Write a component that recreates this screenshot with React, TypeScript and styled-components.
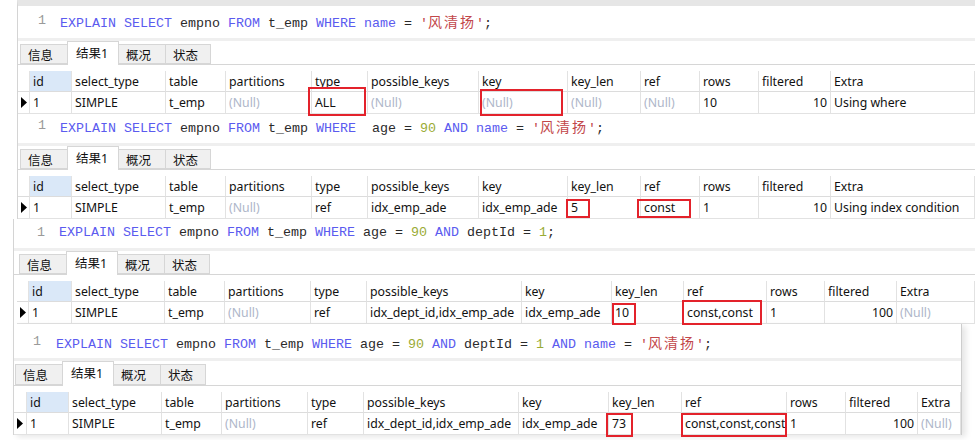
import React from 'react';
import styled, { createGlobalStyle } from 'styled-components';

const Global = createGlobalStyle`
  html, body { margin: 0; padding: 0; background: #fff; }
  body { width: 975px; height: 440px; overflow: hidden; font-family: "Noto Sans", "Noto Sans CJK SC", sans-serif; }
`;

const Page = styled.div`
  display: flex;
  flex-direction: column;
  width: 975px;
  height: 440px;
  overflow: hidden;
  background: #fff;
`;

const Window = styled.section<{ $left: number; $width: number; $topBand: number; $edge?: boolean }>`
  position: relative;
  flex: none;
  box-sizing: border-box;
  margin-left: ${(p) => p.$left}px;
  width: ${(p) => p.$width}px;
  background: #fff;
  border-left: 1px solid #d4d4d4;
  ${(p) => (p.$topBand ? `border-top: ${p.$topBand}px solid #e6e6e6;` : '')}
  ${(p) => (p.$edge ? 'border-right: 1px solid #cdcdcd; box-shadow: 4px 2px 6px rgba(0,0,0,0.10);' : '')}
`;

const Editor = styled.div<{ $padTop: number; $height: number; $numPad: number }>`
  box-sizing: border-box;
  height: ${(p) => p.$height}px;
  padding-top: ${(p) => p.$padTop}px;
  padding-left: ${(p) => p.$numPad}px;
  display: flex;
  align-items: flex-start;
  font-family: "Liberation Mono", monospace;
  font-size: 13.33px;
`;

const LineNo = styled.span<{ $w: number }>`
  flex: none;
  width: ${(p) => p.$w}px;
  line-height: 24px;
  color: #9a9a9a;
`;

const Code = styled.span`
  white-space: pre;
  line-height: 24px;
  color: #2a2a2a;
`;

const Tok = styled.span<{ $kind: 'k' | 'i' | 'n' | 's' | 'o' }>`
  color: ${(p) =>
    p.$kind === 'k' ? '#5b5bef' : p.$kind === 'n' ? '#9aab34' : p.$kind === 's' ? '#c2474a' : '#2a2a2a'};
`;

const Han = styled.span`
  font-family: "Noto Sans CJK SC", sans-serif;
  font-size: 14px;
  letter-spacing: 2px;
  color: #c2474a;
`;

const Divider = styled.div`
  height: 3px;
  background: #efefef;
`;

const TabBar = styled.div<{ $pad: number; $h: number }>`
  box-sizing: border-box;
  display: flex;
  align-items: flex-end;
  height: ${(p) => p.$h}px;
  padding-left: ${(p) => p.$pad}px;
  border-bottom: 1px solid #d6d6d6;
`;

const Tab = styled.div<{ $active?: boolean; $w: number }>`
  box-sizing: border-box;
  width: ${(p) => p.$w}px;
  height: ${(p) => (p.$active ? 'calc(100% + 1px)' : 'calc(100% - 3px)')};
  margin-bottom: ${(p) => (p.$active ? '-1px' : '0')};
  margin-right: -1px;
  display: flex;
  align-items: center;
  padding-left: ${(p) => (p.$active ? 8 : 7)}px;
  padding-bottom: ${(p) => (p.$active ? 3 : 0)}px;
  background: ${(p) => (p.$active ? '#fff' : '#f0f0f0')};
  border: 1px solid #d6d6d6;
  border-bottom: ${(p) => (p.$active ? 'none' : '1px solid #d6d6d6')};
  font-size: 12.5px;
  color: #111;
  position: relative;
  z-index: ${(p) => (p.$active ? 1 : 0)};
`;

const Grid = styled.div<{ $cols: string; $pad: number }>`
  display: grid;
  grid-template-columns: ${(p) => p.$cols};
  margin-top: 6px;
  margin-left: ${(p) => p.$pad}px;
`;

const HeadCell = styled.div<{ $sel?: boolean }>`
  box-sizing: border-box;
  height: 21px;
  display: flex;
  align-items: center;
  padding-left: 3px;
  background: ${(p) => (p.$sel ? '#dae8f8' : '#fff')};
  border-right: 1px solid #e2e2e2;
  border-bottom: 1px solid #dcdcdc;
  font-size: 12.3px;
  color: #111;
  white-space: nowrap;
  overflow: hidden;
`;

const DataCell = styled.div<{ $null?: boolean; $right?: boolean }>`
  position: relative;
  box-sizing: border-box;
  height: 22px;
  display: flex;
  align-items: center;
  justify-content: ${(p) => (p.$right ? 'flex-end' : 'flex-start')};
  padding: 0 3px;
  border-right: 1px solid #e2e2e2;
  border-bottom: 1px solid #e2e2e2;
  font-size: 12.3px;
  color: ${(p) => (p.$null ? '#aeb6c9' : '#111')};
  white-space: nowrap;
`;

const Value = styled.span`
  flex: none;
`;

const Marker = styled.div`
  box-sizing: border-box;
  height: 22px;
  display: flex;
  align-items: center;
  padding-left: 3px;
  border-right: 1px solid #e2e2e2;
  border-bottom: 1px solid #e2e2e2;
`;

const Corner = styled.div`
  box-sizing: border-box;
  height: 21px;
  border-right: 1px solid #e2e2e2;
  border-bottom: 1px solid #dcdcdc;
`;

const RedBox = styled.div`
  position: absolute;
  z-index: 5;
  box-sizing: border-box;
  border: 2px solid #e3222b;
  pointer-events: none;
`;

type Box = { l: number; t: number; w: number; h: number };

const COLS = ['id', 'select_type', 'table', 'partitions', 'type', 'possible_keys', 'key', 'key_len', 'ref', 'rows', 'filtered', 'Extra'];
const KW = new Set(['EXPLAIN', 'SELECT', 'FROM', 'WHERE', 'AND', 'name']);

function renderSql(sql: string) {
  const re = /('[^']*')|(\d+)|([A-Za-z_]+)|(\s+)|(.)/g;
  const out: React.ReactNode[] = [];
  let m: RegExpExecArray | null;
  let i = 0;
  while ((m = re.exec(sql))) {
    const [t] = m;
    if (m[1]) {
      out.push(
        <Tok key={i++} $kind="s">
          '<Han>{t.slice(1, -1)}</Han>'
        </Tok>
      );
    } else if (m[2]) out.push(<Tok key={i++} $kind="n">{t}</Tok>);
    else if (m[3]) out.push(<Tok key={i++} $kind={KW.has(t) ? 'k' : 'i'}>{t}</Tok>);
    else out.push(<Tok key={i++} $kind="o">{t}</Tok>);
  }
  return out;
}

type PanelDef = {
  left: number;
  width: number;
  topBand: number;
  edge?: boolean;
  edPadTop: number;
  edHeight: number;
  numPad: number;
  numW: number;
  sql: string;
  tabPad: number;
  tabH: number;
  gridPad: number;
  cols: string;
  row: (string | null)[];
  boxes: Record<number, Box>;
};

const TABS = [
  { label: '信息', w: 48 },
  { label: '结果1', w: 52, active: true },
  { label: '概况', w: 48 },
  { label: '状态', w: 46 },
];

const PANELS: PanelDef[] = [
  {
    left: 17, width: 958, topBand: 6, edPadTop: 3, edHeight: 32, numPad: 20, numW: 22,
    sql: "EXPLAIN SELECT empno FROM t_emp WHERE name = '风清扬';",
    tabPad: 2, tabH: 24, gridPad: 0,
    cols: '12px 42px 94px 60px 86px 56px 111px 89px 73px 59px 59px 72px 1fr',
    row: ['1', 'SIMPLE', 't_emp', null, 'ALL', null, null, null, null, '10', '10', 'Using where'],
    boxes: { 4: { l: -4, t: -5, w: 58, h: 29 }, 6: { l: 1, t: -3, w: 83, h: 27 } },
  },
  {
    left: 17, width: 958, topBand: 0, edPadTop: 0, edHeight: 29, numPad: 20, numW: 22,
    sql: "EXPLAIN SELECT empno FROM t_emp WHERE  age = 90 AND name = '风清扬';",
    tabPad: 2, tabH: 24, gridPad: 0,
    cols: '12px 42px 94px 60px 86px 56px 111px 89px 73px 59px 59px 72px 1fr',
    row: ['1', 'SIMPLE', 't_emp', null, 'ref', 'idx_emp_ade', 'idx_emp_ade', '5', 'const', '1', '10', 'Using index condition'],
    boxes: { 7: { l: -2, t: 2, w: 24, h: 19 }, 8: { l: -4, t: 2, w: 54, h: 19 } },
  },
  {
    left: 13, width: 962, topBand: 0, edPadTop: 2, edHeight: 29, numPad: 23, numW: 22,
    sql: 'EXPLAIN SELECT empno FROM t_emp WHERE age = 90 AND deptId = 1;',
    tabPad: 5, tabH: 24, gridPad: 3,
    cols: '12px 43px 93px 60px 86px 56px 155px 90px 72px 83px 58px 72px 1fr',
    row: ['1', 'SIMPLE', 't_emp', null, 'ref', 'idx_dept_id,idx_emp_ade', 'idx_emp_ade', '10', 'const,const', '1', '100', null],
    boxes: { 7: { l: 0, t: 1, w: 24, h: 22 }, 8: { l: -2, t: -2, w: 80, h: 25 } },
  },
  {
    left: 13, width: 949, topBand: 0, edge: true, edPadTop: 6, edHeight: 34, numPad: 19, numW: 23,
    sql: "EXPLAIN SELECT empno FROM t_emp WHERE age = 90 AND deptId = 1 AND name = '风清扬';",
    tabPad: 1, tabH: 25, gridPad: 0,
    cols: '13px 42px 93px 60px 86px 56px 155px 90px 73px 105px 59px 72px 1fr',
    row: ['1', 'SIMPLE', 't_emp', null, 'ref', 'idx_dept_id,idx_emp_ade', 'idx_emp_ade', '73', 'const,const,const', '1', '100', null],
    boxes: { 7: { l: -3, t: 0, w: 27, h: 24 }, 8: { l: -1, t: 0, w: 106, h: 24 } },
  },
];

const Arrow = () => (
  <svg width="6" height="11" viewBox="0 0 6 11">
    <polygon points="0,0 6,5.5 0,11" fill="#000" />
  </svg>
);

function Panel({ d }: { d: PanelDef }) {
  return (
    <Window $left={d.left} $width={d.width} $topBand={d.topBand} $edge={d.edge}>
      <Editor $padTop={d.edPadTop} $height={d.edHeight} $numPad={d.numPad}>
        <LineNo $w={d.numW}>1</LineNo>
        <Code>{renderSql(d.sql)}</Code>
      </Editor>
      <Divider />
      <TabBar $pad={d.tabPad} $h={d.tabH}>
        {TABS.map((t) => (
          <Tab key={t.label} $w={t.w} $active={t.active}>
            {t.label}
          </Tab>
        ))}
      </TabBar>
      <Grid $cols={d.cols} $pad={d.gridPad}>
        <Corner />
        {COLS.map((c, i) => (
          <HeadCell key={c} $sel={i === 0}>
            {c}
          </HeadCell>
        ))}
        <Marker>
          <Arrow />
        </Marker>
        {d.row.map((v, i) => {
          const b = d.boxes[i];
          return (
            <DataCell key={i} $null={v === null} $right={i === 10}>
              <Value>{v === null ? '(Null)' : v}</Value>
              {b && <RedBox style={{ left: b.l, top: b.t, width: b.w, height: b.h }} />}
            </DataCell>
          );
        })}
      </Grid>
    </Window>
  );
}

export default function App() {
  return (
    <Page>
      <Global />
      {PANELS.map((d, i) => (
        <Panel key={i} d={d} />
      ))}
    </Page>
  );
}
